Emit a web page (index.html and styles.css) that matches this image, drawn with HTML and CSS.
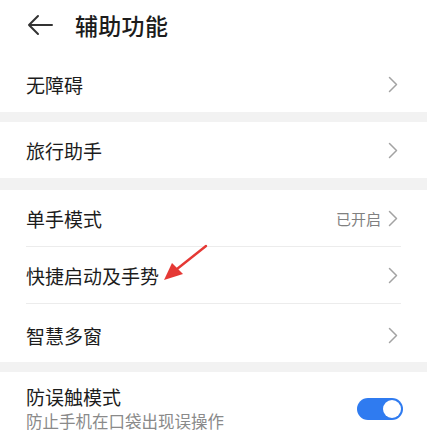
FILE: index.html
```html
<!DOCTYPE html>
<html lang="zh">
<head>
<meta charset="utf-8">
<link rel="stylesheet" href="styles.css">
</head>
<body>
<div class="page">
  <header class="header">
    <svg class="back" width="26" height="22" viewBox="0 0 26 22"><path d="M25 11H2M11 2L2 11l9 9" fill="none" stroke="#333" stroke-width="2" stroke-linecap="round" stroke-linejoin="round"/></svg>
    <h1 class="title">辅助功能</h1>
  </header>

  <section class="group">
    <div class="row"><span class="label">无障碍</span><svg class="chev" width="10" height="17" viewBox="0 0 10 17"><path d="M1.5 1.5L8.5 8.5L1.5 15.5" fill="none" stroke="#a3a3a3" stroke-width="1.5" stroke-linejoin="round" stroke-linecap="round"/></svg></div>
  </section>
  <div class="gap gap1"></div>
  <section class="group">
    <div class="row"><span class="label">旅行助手</span><svg class="chev" width="10" height="17" viewBox="0 0 10 17"><path d="M1.5 1.5L8.5 8.5L1.5 15.5" fill="none" stroke="#a3a3a3" stroke-width="1.5" stroke-linejoin="round" stroke-linecap="round"/></svg></div>
  </section>
  <div class="gap gap2"></div>
  <section class="group">
    <div class="row"><span class="label">单手模式</span><span class="value">已开启</span><svg class="chev" width="10" height="17" viewBox="0 0 10 17"><path d="M1.5 1.5L8.5 8.5L1.5 15.5" fill="none" stroke="#a3a3a3" stroke-width="1.5" stroke-linejoin="round" stroke-linecap="round"/></svg></div>
    <div class="divider"></div>
    <div class="row"><span class="label">快捷启动及手势</span><svg class="chev" width="10" height="17" viewBox="0 0 10 17"><path d="M1.5 1.5L8.5 8.5L1.5 15.5" fill="none" stroke="#a3a3a3" stroke-width="1.5" stroke-linejoin="round" stroke-linecap="round"/></svg>
      <svg class="pointer" width="50" height="42" viewBox="0 0 50 42"><path d="M46 3L17 26" stroke="#e53935" stroke-width="2.4" stroke-linecap="round"/><path d="M4 37L12 20L23 31Z" fill="#e53935"/></svg>
    </div>
    <div class="divider"></div>
    <div class="row row-last"><span class="label">智慧多窗</span><svg class="chev" width="10" height="17" viewBox="0 0 10 17"><path d="M1.5 1.5L8.5 8.5L1.5 15.5" fill="none" stroke="#a3a3a3" stroke-width="1.5" stroke-linejoin="round" stroke-linecap="round"/></svg></div>
  </section>
  <div class="gap gap3"></div>
  <section class="group">
    <div class="row row-two">
      <div class="texts">
        <span class="label">防误触模式</span>
        <span class="sub">防止手机在口袋出现误操作</span>
      </div>
      <span class="toggle"><span class="knob"></span></span>
    </div>
  </section>
</div>
</body>
</html>
```

FILE: styles.css
```css
* { box-sizing: border-box; }
html, body { margin: 0; padding: 0; background: #fff; }
body {
  font-family: "Noto Sans CJK SC", "Noto Sans", sans-serif;
  color: #1c1c1c;
  width: 427px;
  height: 432px;
  overflow: hidden;
}
.page { display: flex; flex-direction: column; }
.header {
  height: 56px;
  display: flex;
  align-items: center;
  padding: 0 0 6px 27px;
}
.back { display: block; margin-right: 22px; }
.title {
  margin: 0;
  font-size: 23px;
  font-weight: 500;
  line-height: 1;
  letter-spacing: 0.3px;
  color: #1c1c1c;
}
.group { background: #fff; }
.gap { background: #f2f2f2; }
.gap1 { height: 10px; }
.gap2 { height: 12px; }
.gap3 { height: 10px; }
.row {
  height: 56px;
  display: flex;
  align-items: center;
  padding: 0 29px 0 26px;
  position: relative;
}
.row-last { height: 58px; padding-top: 4px; }
.label { font-size: 19px; line-height: 1; flex: 1; }
.value { font-size: 15px; color: #808080; margin-right: 7px; }
.chev { display: block; }
.divider { height: 1px; background: #ececec; margin: 0 26px; }
.pointer { position: absolute; left: 160px; top: -4px; }
.row-two { height: 62px; align-items: flex-start; padding-top: 15px; }
.texts { flex: 1; display: flex; flex-direction: column; }
.sub { font-size: 16.5px; color: #8a8a8a; line-height: 1; margin-top: 7px; }
.toggle {
  width: 46px;
  height: 22px;
  border-radius: 11px;
  background: #2f7bf0;
  position: relative;
  margin-top: 11px;
  margin-right: -5px;
}
.knob {
  position: absolute;
  right: 2px;
  top: 2px;
  width: 18px;
  height: 18px;
  border-radius: 50%;
  background: #fff;
}
```
